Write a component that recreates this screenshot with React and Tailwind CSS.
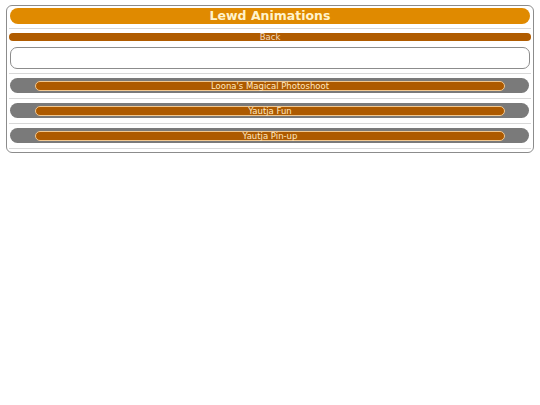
export default function App() {
  const rows = ["Loona's Magical Photoshoot", "Yautja Fun", "Yautja Pin-up"];
  const font = { fontFamily: '"DejaVu Sans", Verdana, sans-serif' };
  return (
    <div className="w-[540px] h-[405px] bg-white pt-[5px] px-[6px]" style={font}>
      <div className="border border-[#8c8c8c] rounded-[6px] px-[2px] pt-[2px] pb-[3px]">
        <div className="pb-[4px] border-b border-[#d8d8d8]">
          <div className="mx-[1px] h-[16px] rounded-full bg-[#e08a00] text-[#fff3cc] font-bold text-[12.5px] leading-[16px] text-center">
            Lewd Animations
          </div>
        </div>
        <div className="pt-[4px] pb-[4px] border-b border-[#d8d8d8]">
          <div className="h-[8px] rounded-full bg-[#b05c00] text-[#f3dcc0] text-[8.5px] leading-[8px] text-center">
            Back
          </div>
          <div className="mt-[6px] mx-[1px] h-[22px] rounded-[7px] border border-[#8c8c8c] bg-white"></div>
        </div>
        {rows.map((r) => (
          <div key={r} className="pt-[4px] pb-[5px] border-b border-[#d8d8d8]">
            <div className="mx-[1px] mr-[2px] h-[15px] rounded-full bg-[#7a7a7a] pl-[25px] pr-[24px] pt-[3px]">
              <div className="h-[10px] rounded-full bg-[#ad5a00] border border-[#f2c890] text-[#ffe8c0] text-[8.5px] leading-[8px] text-center">
                {r}
              </div>
            </div>
          </div>
        ))}
      </div>
    </div>
  );
}
